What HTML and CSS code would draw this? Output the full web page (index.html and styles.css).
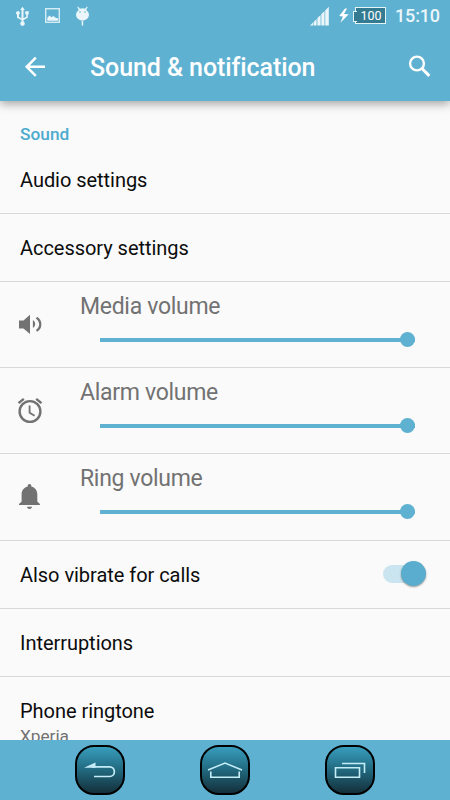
FILE: index.html
```html
<!DOCTYPE html>
<html lang="en">
<head>
    <meta charset="UTF-8">
    <meta name="viewport" content="width=device-width, initial-scale=1.0">
    <title>Sound &amp; notification</title>
    <link rel="stylesheet" href="styles.css">
</head>
<body>
    <div class="screen">
        <header class="header">
            <div class="status-bar">
                <svg class="status-left" width="110" height="32" viewBox="0 0 110 32" fill="#eaf6fa">
                    <!-- usb -->
                    <path d="M22.500 6.800l2.300 3.200h-1.300v8.300l2.700-1.500v-2.500h-1v-3h3.500v3.200h-.9v3.200l-4.300 2.200v1.500a2.300 2.300 0 1 1-2 0v-1.500l-4.500-2.200v-3a1.900 1.900 0 1 1 1.900 0v2.100l2.600 1.600V10h-1.300z"/>
                    <!-- screenshot saved -->
                    <rect x="45.700" y="8.700" width="13.600" height="13.600" fill="none" stroke="#d5edf5" stroke-width="1.400"/>
                    <path d="M47.300 20.800v-3l2.200-2.300 2 1.800 2-1.300 2.500 2 2 .2v2.600z"/>
                    <!-- debugging -->
                    <path d="M78 6.500l2 2.300q2.500-1 5 0l2-2.300.7.500-1.500 3q2.800 2 2.800 4.500c0 3.500-3 6-6.500 6s-6.500-2.500-6.500-6q0-2.500 2.800-4.500l-1.500-3z"/>
                    <path d="M81.700 21h1.500v4.500h-1.500z"/>
                    <circle cx="80" cy="12" r=".8" fill="#5fb1d1"/>
                    <circle cx="85" cy="12" r=".8" fill="#5fb1d1"/>
                </svg>
                <div class="status-right">
                    <svg width="40" height="32" viewBox="310 0 40 32" fill="#eaf6fa">
                        <path d="M310 25.500h3v-3zM313.600 25.500h3v-6.600l-3 3zM317.400 25.500h3.200v-10.600l-3.200 3.200zM321.300 25.500h3.200v-14.600l-3.200 3.300zM325.200 25.500h3.600v-18.700l-3.600 3.600z"/>
                        <path d="M345 8.500l-5.800 7.500 3.700.4-2.500 6.300 8.300-8.400-4.700-.4 3-5.400z" fill="#fff"/>
                    </svg>
                    <div class="battery">100</div>
                    <div class="clock">15:10</div>
                </div>
            </div>
            <div class="toolbar">
                <svg class="back" width="30" height="30" viewBox="20 51.500 30 30" fill="none" stroke="#fff" stroke-width="2.500">
                    <path d="M45 66.300H27M35.800 57.200l-9.100 9.100 9.100 9.100"/>
                </svg>
                <h1 class="title">Sound &amp; notification</h1>
                <svg class="search" width="30" height="30" viewBox="405 51.500 30 30" fill="none" stroke="#fff">
                    <circle cx="417" cy="63" r="6.900" stroke-width="2.400"/>
                    <path d="M422 68l7.300 7.400" stroke-width="3"/>
                </svg>
            </div>
        </header>

        <main class="settings">
            <h2 class="category">Sound</h2>
            <div class="row">Audio settings</div>
            <div class="row">Accessory settings</div>

            <div class="row volume">
                <svg class="icon" width="30" height="30" viewBox="15 310 30 30" fill="#727272">
                    <path d="M19 320.500h4.500l6.500-5.800v19.200l-6.500-5.400H19z"/>
                    <path d="M32.900 320.300c3 1.200 3 6.300 0 7.500z"/>
                    <path d="M36.500 317.700c5 3.200 5 10 0 13.200" fill="none" stroke="#727272" stroke-width="2.300"/>
                </svg>
                <div class="control">
                    <div class="label">Media volume</div>
                    <div class="slider"><div class="thumb"></div></div>
                </div>
            </div>
            <div class="row volume">
                <svg class="icon" width="30" height="30" viewBox="15 396 30 30" fill="none" stroke="#727272" stroke-width="2.400">
                    <circle cx="30" cy="411.500" r="10.400"/>
                    <path d="M18.500 403.200l5.300-4.400M41.500 403.200l-5.300-4.400"/>
                    <path d="M29.600 405.500v7.200l5 3" stroke-width="1.800"/>
                </svg>
                <div class="control">
                    <div class="label">Alarm volume</div>
                    <div class="slider"><div class="thumb"></div></div>
                </div>
            </div>
            <div class="row volume">
                <svg class="icon" width="30" height="30" viewBox="15 482 30 30" fill="#727272">
                    <path d="M29.500 484c1.100 0 1.800.8 1.800 1.700v.8c3.800 1 6 4 6 7.800v7.200l2.600 2.600v1H19v-1l2.600-2.600v-7.200c0-3.800 2.300-6.800 6.100-7.800v-.8c0-.9.700-1.700 1.800-1.700z"/>
                    <path d="M27 506.800h5c0 2.800-5 2.800-5 0z"/>
                </svg>
                <div class="control">
                    <div class="label">Ring volume</div>
                    <div class="slider"><div class="thumb"></div></div>
                </div>
            </div>

            <div class="row">
                Also vibrate for calls
                <div class="switch"><div class="knob"></div></div>
            </div>
            <div class="row">Interruptions</div>
            <div class="row ringtone">
                Phone ringtone
                <div class="summary">Xperia</div>
            </div>
        </main>

        <nav class="navbar">
            <div class="nav-button">
                <svg width="50" height="50" viewBox="0 0 50 50" fill="none" stroke="#c5edf8" stroke-width="1.700">
                    <path d="M17 21.800h17.500c6.500 0 6.500 9.700 0 9.700H19"/>
                    <path d="M9 22.700l11.500-5.200v5.200z" fill="#c5edf8" stroke="none"/>
                </svg>
            </div>
            <div class="nav-button">
                <svg width="50" height="50" viewBox="0 0 50 50" fill="none" stroke="#c5edf8" stroke-width="1.600">
                    <path d="M8 25l17-7 17 7M10.800 26.500v5.800h28.400v-5.800"/>
                </svg>
            </div>
            <div class="nav-button">
                <svg width="50" height="50" viewBox="0 0 50 50" fill="none" stroke="#c5edf8" stroke-width="1.600">
                    <path d="M17 18.500h22.500V28"/>
                    <path d="M10.500 22.800h24v9.400h-24z"/>
                </svg>
            </div>
        </nav>
    </div>
</body>
</html>
```
FILE: styles.css
```css
* {
    margin: 0;
    padding: 0;
    box-sizing: border-box;
}

body {
    font-family: Roboto, sans-serif;
    background: #fafafa;
    color: #0c0c0c;
}

svg {
    display: block;
    flex-shrink: 0;
}

.screen {
    width: 450px;
    height: 800px;
    display: flex;
    flex-direction: column;
    overflow: hidden;
}

.header {
    height: 101px;
    flex-shrink: 0;
    background: #5fb1d1;
    box-shadow: 0 3px 9px rgba(0, 0, 0, 0.35);
    z-index: 1;
}

.status-bar {
    height: 32px;
    display: flex;
    justify-content: space-between;
}

.status-right {
    display: flex;
    align-items: center;
    padding-right: 10px;
}

.battery {
    width: 31px;
    height: 17px;
    margin-left: 5px;
    margin-top: -1px;
    background: #347b91;
    border: 1px solid #e4f5fa;
    color: #fff;
    font-size: 12.5px;
    line-height: 15px;
    text-align: center;
}

/* battery terminal */
.battery::before {
    content: "";
    float: left;
    width: 3px;
    height: 9px;
    margin: 3px 0 0 -3px;
    background: #347b91;
    border: 1px solid #e4f5fa;
    border-right: 0;
}

.clock {
    width: 45px;
    margin-left: 9px;
    color: #eaf6fa;
    font-size: 18px;
    font-weight: 500;
    letter-spacing: -0.15px;
    line-height: 32px;
}

.toolbar {
    height: 69px;
    display: flex;
    align-items: center;
    padding: 0 15px 0 20px;
}

.title {
    flex: 1;
    margin-left: 40px;
    padding-top: 2px;
    color: #fff;
    font-size: 25px;
    font-weight: 500;
    letter-spacing: -0.08px;
    line-height: 30px;
}

.settings {
    flex: 1;
    min-height: 0;
    overflow: hidden;
}

.category {
    height: 45px;
    padding: 21px 20px 0;
    color: #4dabcf;
    font-size: 17.3px;
    font-weight: 500;
    line-height: 24px;
}

.row {
    height: 68px;
    display: flex;
    align-items: center;
    justify-content: space-between;
    padding: 1px 20px 0;
    border-bottom: 1px solid #d9d9d9;
    font-size: 20px;
    letter-spacing: -0.04px;
}

.volume {
    height: 86.2px;
    justify-content: flex-start;
    padding: 0 35px 0 15px;
}

.control {
    flex: 1;
    margin-left: 35px;
}

.label {
    padding-top: 1px;
    color: #727272;
    font-size: 23px;
    letter-spacing: -0.3px;
    line-height: 28px;
}

.slider {
    height: 16px;
    display: flex;
    align-items: center;
    justify-content: flex-end;
    margin: 11px 0 10px 20px;
    background: linear-gradient(#5fb1d1, #5fb1d1) center / 100% 4px no-repeat;
}

.thumb {
    width: 15px;
    height: 15px;
    border-radius: 50%;
    background: #5fb1d1;
}

.switch {
    width: 43px;
    height: 18px;
    display: flex;
    align-items: center;
    justify-content: flex-end;
    margin-right: 4px;
    margin-top: -2px;
    border-radius: 9px;
    background: #cae5ef;
}

.knob {
    width: 25px;
    height: 25px;
    flex-shrink: 0;
    border-radius: 50%;
    background: #5aadce;
    box-shadow: 0 1px 2px rgba(0, 0, 0, 0.4);
}

.ringtone {
    display: block;
    padding-top: 21px;
    line-height: 26px;
    border-bottom: 0;
}

.summary {
    color: #727272;
    font-size: 17.3px;
    line-height: 24px;
}

.navbar {
    height: 60px;
    flex-shrink: 0;
    display: flex;
    justify-content: center;
    align-items: center;
    gap: 75px;
    background: #5fb1d1;
}

.nav-button {
    width: 50px;
    height: 50px;
    border: 2px solid #000;
    border-radius: 19px;
    background: linear-gradient(#389dbd, #236e85 45%, #142f3a);
}

.nav-button svg {
    margin: -2px;
}
```
